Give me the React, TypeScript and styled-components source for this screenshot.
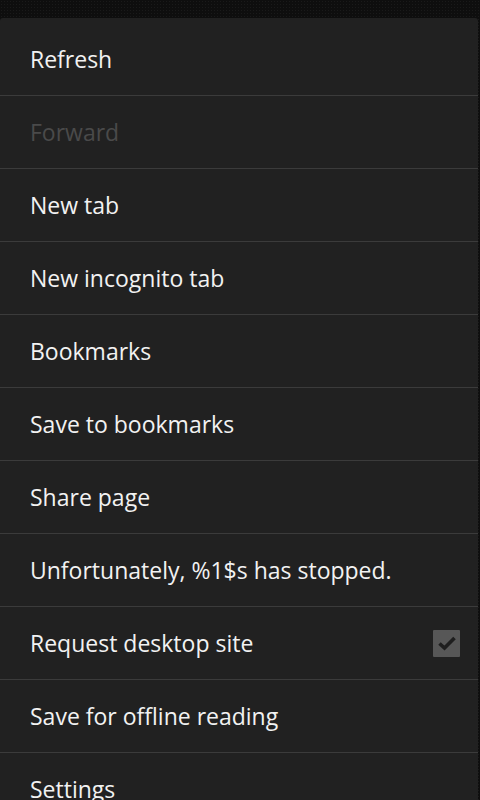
import styled, { createGlobalStyle } from "styled-components"

const Global = createGlobalStyle`
  html, body {
    margin: 0;
    padding: 0;
    background: #0e0e0e;
    overflow: hidden;
  }
  body {
    font-family: "Open Sans", "Noto Sans", sans-serif;
  }
`

const Screen = styled.div`
  width: 480px;
  height: 800px;
  overflow: hidden;
  background-color: #0e0e0e;
  background-image: radial-gradient(#1a1a1a 0.6px, transparent 0.8px);
  background-size: 3px 3px;
  padding-top: 18px;
  box-sizing: border-box;
`

const Panel = styled.div`
  width: 478px;
  background: #212121;
  border-radius: 3px 3px 0 0;
  padding-top: 5px;
  min-height: 782px;
`

const Row = styled.div`
  height: 72px;
  display: flex;
  align-items: center;
  justify-content: space-between;
  padding: 0 18px 0 30px;
  border-bottom: 1px solid #3b3b3b;
  &:last-child {
    border-bottom: none;
  }
`

const Label = styled.span<{ $disabled?: boolean }>`
  font-size: 23px;
  color: ${(p) => (p.$disabled ? "#4a4a4a" : "#f2f2f2")};
`

const Check = styled.div`
  width: 27px;
  height: 27px;
  flex-shrink: 0;
  background: #575757;
  border-radius: 1px;
  display: flex;
  align-items: center;
  justify-content: center;
`

const items = [
  { label: "Refresh" },
  { label: "Forward", disabled: true },
  { label: "New tab" },
  { label: "New incognito tab" },
  { label: "Bookmarks" },
  { label: "Save to bookmarks" },
  { label: "Share page" },
  { label: "Unfortunately, %1$s has stopped." },
  { label: "Request desktop site", checked: true },
  { label: "Save for offline reading" },
  { label: "Settings" },
]

export default function App() {
  return (
    <Screen>
      <Global />
      <Panel>
        {items.map((it) => (
          <Row key={it.label}>
            <Label $disabled={it.disabled}>{it.label}</Label>
            {it.checked && (
              <Check>
                <svg width="22" height="22" viewBox="0 0 22 22">
                  <path d="M3.5 11.5 L8.5 16 L18.5 6" fill="none" stroke="#1e1e1e" strokeWidth="3.6" />
                </svg>
              </Check>
            )}
          </Row>
        ))}
      </Panel>
    </Screen>
  )
}
